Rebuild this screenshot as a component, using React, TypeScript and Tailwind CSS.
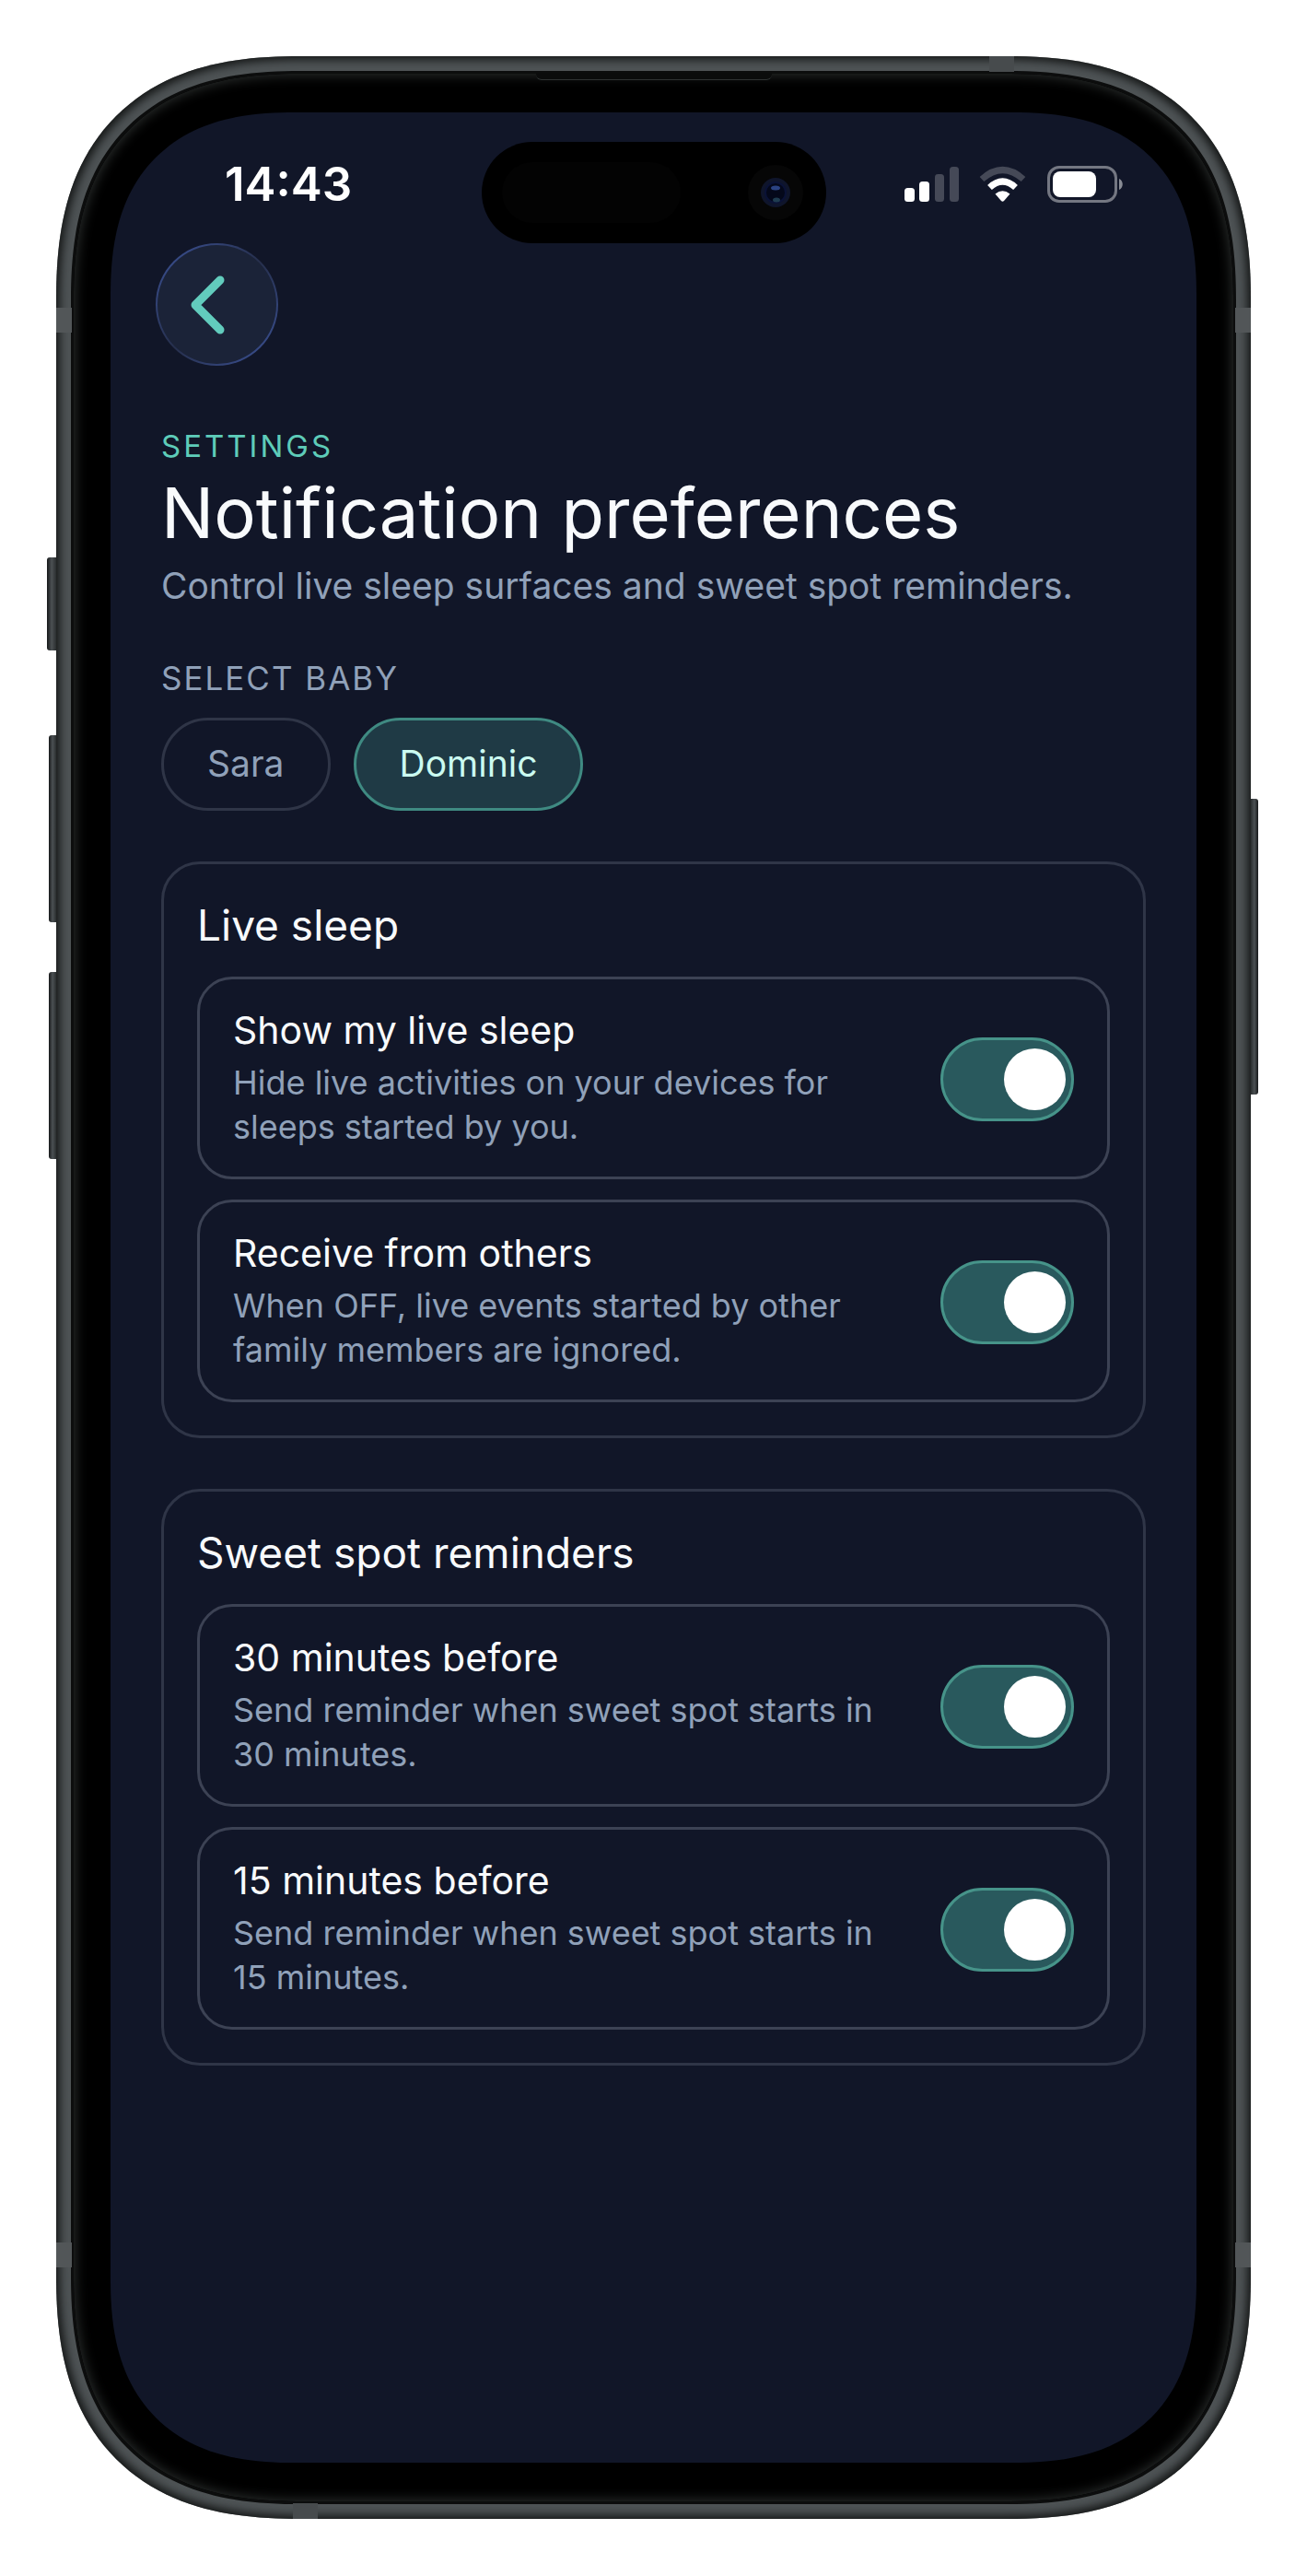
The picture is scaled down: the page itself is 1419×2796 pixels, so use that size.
import { useState } from 'react'

const babies = ['Sara', 'Dominic']

const sections = [
  {
    title: 'Live sleep',
    items: [
      {
        id: 'show-live',
        title: 'Show my live sleep',
        description: 'Hide live activities on your devices for sleeps started by you.',
      },
      {
        id: 'receive-others',
        title: 'Receive from others',
        description: 'When OFF, live events started by other family members are ignored.',
      },
    ],
  },
  {
    title: 'Sweet spot reminders',
    items: [
      {
        id: 'before-30',
        title: '30 minutes before',
        description: 'Send reminder when sweet spot starts in 30 minutes.',
      },
      {
        id: 'before-15',
        title: '15 minutes before',
        description: 'Send reminder when sweet spot starts in 15 minutes.',
      },
    ],
  },
]

type ToggleRowProps = {
  id: string
  title: string
  description: string
}

function ToggleRow({ id, title, description }: ToggleRowProps) {
  return (
    <div className="flex items-center justify-between gap-10 rounded-[38px] border-3 border-[#3c4254] px-9 pt-[33px] pb-[30px]">
      <div className="min-w-0 flex-1">
        <label htmlFor={id} className="block text-[41px] leading-[44px] text-slate-50">
          {title}
        </label>
        <p id={`${id}-hint`} className="mt-[11px] text-[36px] leading-[48px] text-slate-400">
          {description}
        </p>
      </div>
      <input
        id={id}
        type="checkbox"
        role="switch"
        defaultChecked
        aria-describedby={`${id}-hint`}
        className="flex h-[91px] w-[145px] shrink-0 cursor-pointer appearance-none items-center rounded-full border-3 border-[#3c4254] bg-[#1b2338] px-[6px] before:size-[67px] before:rounded-full before:bg-white checked:justify-end checked:border-[#469389] checked:bg-[#29595d]"
      />
    </div>
  )
}

function StatusIcons() {
  return (
    <svg width="238" height="40" viewBox="0 0 238 40" aria-label="Signal, Wi-Fi and battery">
      <g fill="#fff">
        <rect x="0" y="24" width="11" height="15" rx="3.5" />
        <rect x="16" y="17" width="11" height="22" rx="3.5" />
        <rect x="33" y="9" width="10" height="30" rx="3.5" opacity=".22" />
        <rect x="49" y="1" width="10" height="38" rx="3.5" opacity=".22" />
      </g>
      <path d="M84 14.500Q106.500 -5.500 129 14.500" fill="none" stroke="#fff" strokeOpacity=".22" strokeWidth="7" />
      <path d="M92.500 23.500Q106.500 10.500 120.500 23.500" fill="none" stroke="#fff" strokeWidth="7" />
      <path d="M98.500 30.500Q106.500 24 114.500 30.500L108 38Q106.500 39.500 105 38Z" fill="#fff" />
      <rect x="156.500" y="1.500" width="73" height="37" rx="11.500" fill="none" stroke="#fff" strokeOpacity=".42" strokeWidth="3" />
      <rect x="161" y="6" width="47" height="28" rx="8" fill="#fff" />
      <path d="M233 14c5 2 5 10 0 12z" fill="#fff" opacity=".5" />
    </svg>
  )
}

function DynamicIsland() {
  return (
    <div className="flex h-[110px] w-[374px] items-center justify-between rounded-full bg-black pr-[25px] pl-[22px]">
      <div className="h-[66px] w-[194px] rounded-full bg-[#030303]" />
      <svg width="60" height="60" viewBox="0 0 60 60" aria-hidden="true">
        <circle cx="30" cy="30" r="30" fill="#060606" />
        <circle cx="30" cy="30" r="16" fill="#0f152b" />
        <circle cx="30" cy="30" r="11" fill="#04081a" stroke="#0a1236" strokeWidth="2" />
        <ellipse cx="30" cy="25" rx="5" ry="2.500" fill="#2a4282" />
        <ellipse cx="31" cy="38" rx="4" ry="2.500" fill="#1f3c50" />
      </svg>
    </div>
  )
}

function FrameHardware() {
  return (
    <div aria-hidden="true">
      {/* side buttons */}
      <div className="absolute top-[544px] -left-[10px] h-[101px] w-[10px] rounded-l-[3px] bg-linear-to-r from-[#17191a] via-[#4c5154] to-[#2b2f30]" />
      <div className="absolute top-[737px] -left-2 h-[203px] w-2 rounded-l-[3px] bg-linear-to-r from-[#17191a] via-[#4c5154] to-[#2b2f30]" />
      <div className="absolute top-[994px] -left-2 h-[203px] w-2 rounded-l-[3px] bg-linear-to-r from-[#17191a] via-[#4c5154] to-[#2b2f30]" />
      <div className="absolute top-[806px] -right-2 h-[321px] w-2 rounded-r-[3px] bg-linear-to-l from-[#17191a] via-[#4c5154] to-[#2b2f30]" />
      {/* antenna bands */}
      <div className="absolute top-[273px] left-0 h-[27px] w-[17px] bg-[#525658]" />
      <div className="absolute top-[273px] right-0 h-[27px] w-[17px] bg-[#525658]" />
      <div className="absolute bottom-[273px] left-0 h-[27px] w-[17px] bg-[#525658]" />
      <div className="absolute right-0 bottom-[273px] h-[27px] w-[17px] bg-[#525658]" />
      <div className="absolute top-0 right-[257px] h-[17px] w-[27px] bg-[#474b4d]" />
      <div className="absolute bottom-0 left-[257px] h-[17px] w-[27px] bg-[#474b4d]" />
      {/* earpiece */}
      <div className="absolute top-[18px] left-1/2 h-2 w-[256px] -translate-x-1/2 rounded-b-[6px] border-b border-[#2f3333] bg-[#0b0c0c]" />
    </div>
  )
}

export default function App() {
  const [baby, setBaby] = useState('Dominic')

  return (
    <div className="flex min-h-screen bg-white px-[61px] pt-[61px] pb-[62px] font-['Inter','Liberation_Sans',sans-serif]">
      <div className="relative flex flex-1 rounded-[265px] bg-[#4e5355] p-4 shadow-[inset_0_0_10px_4px_#161818] [corner-shape:superellipse(1.3)]">
        <div className="flex flex-1 rounded-[249px] border-3 border-[#0c0d0d] bg-black px-10 pt-[42px] pb-[42px] shadow-[inset_0_0_14px_1px_#2e3231] [corner-shape:superellipse(1.3)]">
          <main className="flex-1 rounded-[200px] bg-[#111628] [corner-shape:superellipse(1.3)]">
            <div className="grid grid-cols-[1fr_auto_1fr] items-center pt-8">
              <span className="pb-[18px] pl-[124px] text-[51px] leading-[50px] font-semibold text-white">14:43</span>
              <DynamicIsland />
              <div className="flex justify-end pr-[79px] pb-[18px]">
                <StatusIcons />
              </div>
            </div>

            <button
              type="button"
              aria-label="Back"
              className="ml-[49px] block rounded-full bg-linear-135 from-[#3d549c] via-[#262f4c] to-[#3d549c] p-[2px]"
            >
              <span className="flex size-[129px] items-center justify-center rounded-full bg-[#1b2338] pr-5">
                <svg width="40" height="66" viewBox="0 0 40 66" fill="none" aria-hidden="true">
                  <path d="M33 6L6 33L33 60" stroke="#62ccbd" strokeWidth="9" strokeLinecap="round" strokeLinejoin="round" />
                </svg>
              </span>
            </button>

            <div className="px-[55px] pt-[67px] pb-12">
              <p className="text-[33px] leading-[40px] tracking-[3px] text-[#5eccb9]">SETTINGS</p>
              <h1 className="mt-1 text-[76px] leading-[96px] text-slate-50">Notification preferences</h1>
              <p className="mt-[6px] text-[39px] leading-[52px] text-slate-400">
                Control live sleep surfaces and sweet spot reminders.
              </p>

              <h2 className="mt-[50px] text-[35px] leading-[48px] tracking-[2px] text-slate-400">SELECT BABY</h2>
              <div className="mt-[19px] flex gap-[25px]">
                {babies.map((name) => (
                  <button
                    key={name}
                    type="button"
                    aria-pressed={baby === name}
                    onClick={() => setBaby(name)}
                    className={
                      baby === name
                        ? 'h-[101px] rounded-full border-3 border-[#3f8a82] bg-[#1f3a45] px-[47px] text-[39px] text-teal-100'
                        : 'h-[101px] rounded-full border-3 border-[#2f3547] px-[47px] text-[39px] text-slate-400'
                    }
                  >
                    {name}
                  </button>
                ))}
              </div>

              {sections.map((section) => (
                <section
                  key={section.title}
                  className="mt-[55px] rounded-[42px] border-3 border-[#2f3547] p-9"
                >
                  <h2 className="text-[46px] leading-[60px] text-slate-50">{section.title}</h2>
                  <div className="mt-[26px] flex flex-col gap-[22px]">
                    {section.items.map((item) => (
                      <ToggleRow key={item.id} {...item} />
                    ))}
                  </div>
                </section>
              ))}
            </div>
          </main>
        </div>
        <FrameHardware />
      </div>
    </div>
  )
}
